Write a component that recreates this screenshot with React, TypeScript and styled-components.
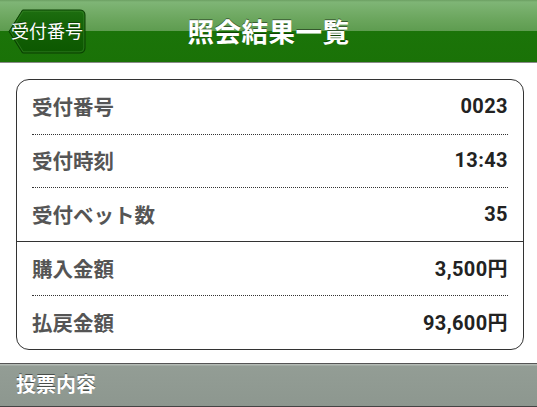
import React from "react";
import styled, { createGlobalStyle } from "styled-components";

const Global = createGlobalStyle`
  html, body { margin: 0; padding: 0; background: #fff; }
  body { font-family: "Noto Sans CJK JP", "Noto Sans", sans-serif; }
  * { box-sizing: border-box; }
`;

const Page = styled.div`
  width: 537px;
  height: 407px;
  overflow: hidden;
  display: flex;
  flex-direction: column;
  background: #fff;
`;

const Header = styled.header`
  height: 64px;
  display: grid;
  grid-template-columns: 1fr auto 1fr;
  align-items: center;
  background: linear-gradient(
    to bottom,
    #6c9f62 0px,
    #7fb576 2px,
    #6aa55c 20px,
    #5e9c50 31px,
    #1b7409 31px,
    #1a7207 62px,
    #8a8a8a 62px,
    #8a8a8a 63px,
    #d8d8d8 63px
  );
`;

const BackButton = styled.button`
  position: relative;
  justify-self: start;
  margin-left: 8px;
  width: 78px;
  height: 45px;
  padding: 0;
  border: none;
  background: transparent;
  color: #fff;
  font-family: "Noto Sans CJK JP", sans-serif;
  font-size: 18px;
  font-weight: 400;
  display: flex;
  align-items: center;
  justify-content: center;
  text-shadow: 0 -1px 0 rgba(0, 0, 0, 0.35);
  cursor: pointer;
  svg {
    position: absolute;
    inset: 0;
    z-index: 0;
  }
  span {
    position: relative;
    z-index: 1;
    margin-top: -3px;
    margin-left: 0;
  }
`;

const Title = styled.h1`
  margin: 0;
  color: #fff;
  font-size: 26.5px;
  font-weight: 700;
  letter-spacing: 0.5px;
  margin-top: -3px;
  text-shadow: 0 -1px 0 rgba(0, 0, 0, 0.45);
`;

const Card = styled.section`
  margin: 16px 13px 0 16px;
  border: 1px solid #333;
  border-radius: 13px;
  background: #fff;
`;

const Group = styled.div`
  & + & {
    border-top: 1px solid #333;
  }
`;

const Row = styled.div`
  height: 53.5px;
  margin: 0 15px;
  display: flex;
  align-items: center;
  justify-content: space-between;
  & + & {
    border-top: 1px dotted #333;
  }
`;

const Label = styled.span`
  color: #555;
  font-size: 20.5px;
  font-weight: 700;
  margin-top: -1px;
`;

const Value = styled.span`
  color: #222;
  font-family: Roboto, "Noto Sans CJK JP", sans-serif;
  font-size: 20px;
  font-weight: 700;
  letter-spacing: 0.4px;
  margin-top: -1px;
`;

const SectionBar = styled.div`
  margin-top: 13px;
  height: 45px;
  display: flex;
  align-items: center;
  padding-left: 16px;
  border-top: 1px solid #555;
  border-bottom: 1px solid #444;
  background: linear-gradient(to bottom, #b3bab4 0px, #b3bab4 1px, #939d95 2px, #8d978f 100%);
  color: #fff;
  font-size: 20px;
  font-weight: 700;
  text-shadow: 0 -1px 0 rgba(0, 0, 0, 0.5);
`;

const SectionTitle = styled.span`
  margin-top: -3px;
`;

type Item = { label: string; value: string };

const groups: Item[][] = [
  [
    { label: "受付番号", value: "0023" },
    { label: "受付時刻", value: "13:43" },
    { label: "受付ベット数", value: "35" },
  ],
  [
    { label: "購入金額", value: "3,500円" },
    { label: "払戻金額", value: "93,600円" },
  ],
];

export default function App() {
  return (
    <Page>
      <Global />
      <Header>
        <BackButton type="button">
          <svg width="78" height="45" viewBox="0 0 78 45">
            <defs>
              <linearGradient id="bb" x1="0" y1="0" x2="0" y2="1">
                <stop offset="0" stopColor="#1d6e10" />
                <stop offset="0.5" stopColor="#125f05" />
                <stop offset="1" stopColor="#0c5800" />
              </linearGradient>
            </defs>
            <path
              d="M1 22.5 L14.5 1 H72 Q77 1 77 6 V39 Q77 44 72 44 H14.5 Z"
              fill="url(#bb)"
              stroke="#0a3f02"
              strokeWidth="1"
            />
            <path
              d="M2.6 22.5 L15.2 2.2 H72 Q75.8 2.2 75.8 6 V39 Q75.8 42.8 72 42.8 H15.2 Z"
              fill="none"
              stroke="#3e8a2e"
              strokeWidth="0.8"
              opacity="0.7"
            />
          </svg>
          <span>受付番号</span>
        </BackButton>
        <Title>照会結果一覧</Title>
        <div />
      </Header>
      <Card>
        {groups.map((g, gi) => (
          <Group key={gi}>
            {g.map((it) => (
              <Row key={it.label}>
                <Label>{it.label}</Label>
                <Value>{it.value}</Value>
              </Row>
            ))}
          </Group>
        ))}
      </Card>
      <SectionBar>
        <SectionTitle>投票内容</SectionTitle>
      </SectionBar>
    </Page>
  );
}
